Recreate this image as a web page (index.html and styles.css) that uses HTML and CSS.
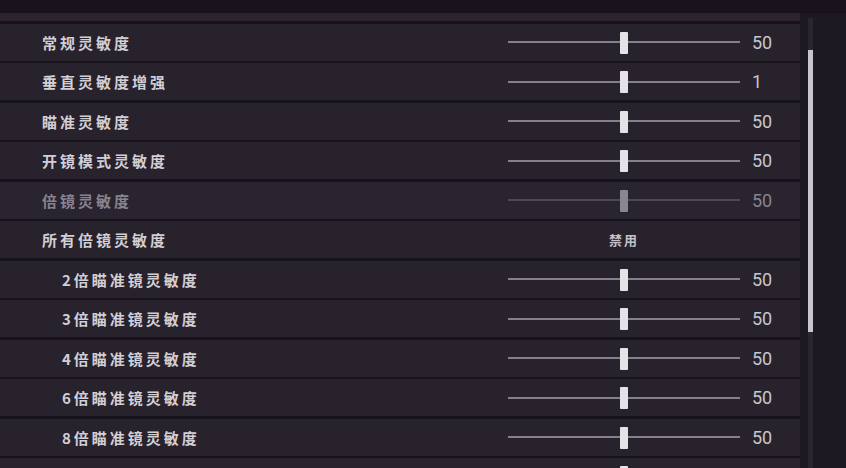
FILE: index.html
```html
<!DOCTYPE html>
<html lang="zh-CN">
<head>
    <meta charset="UTF-8">
    <title>灵敏度设置</title>
    <link rel="stylesheet" href="styles.css">
</head>
<body>
    <div class="top-bar"></div>

    <div class="main">
        <div class="list">
            <div class="row row-cut"></div>

            <div class="row">
                <span class="label">常规灵敏度</span>
                <div class="slider"><div class="track"></div><div class="knob"></div></div>
                <span class="value">50</span>
            </div>
            <div class="row">
                <span class="label">垂直灵敏度增强</span>
                <div class="slider"><div class="track"></div><div class="knob"></div></div>
                <span class="value">1</span>
            </div>
            <div class="row">
                <span class="label">瞄准灵敏度</span>
                <div class="slider"><div class="track"></div><div class="knob"></div></div>
                <span class="value">50</span>
            </div>
            <div class="row">
                <span class="label">开镜模式灵敏度</span>
                <div class="slider"><div class="track"></div><div class="knob"></div></div>
                <span class="value">50</span>
            </div>
            <div class="row disabled">
                <span class="label">倍镜灵敏度</span>
                <div class="slider"><div class="track"></div><div class="knob"></div></div>
                <span class="value">50</span>
            </div>
            <div class="row">
                <span class="label">所有倍镜灵敏度</span>
                <div class="option">禁用</div>
                <span class="value"></span>
            </div>
            <div class="row sub">
                <span class="label">2倍瞄准镜灵敏度</span>
                <div class="slider"><div class="track"></div><div class="knob"></div></div>
                <span class="value">50</span>
            </div>
            <div class="row sub">
                <span class="label">3倍瞄准镜灵敏度</span>
                <div class="slider"><div class="track"></div><div class="knob"></div></div>
                <span class="value">50</span>
            </div>
            <div class="row sub">
                <span class="label">4倍瞄准镜灵敏度</span>
                <div class="slider"><div class="track"></div><div class="knob"></div></div>
                <span class="value">50</span>
            </div>
            <div class="row sub">
                <span class="label">6倍瞄准镜灵敏度</span>
                <div class="slider"><div class="track"></div><div class="knob"></div></div>
                <span class="value">50</span>
            </div>
            <div class="row sub">
                <span class="label">8倍瞄准镜灵敏度</span>
                <div class="slider"><div class="track"></div><div class="knob"></div></div>
                <span class="value">50</span>
            </div>
            <div class="row sub">
                <span class="label">15倍瞄准镜灵敏度</span>
                <div class="slider"><div class="track"></div><div class="knob"></div></div>
                <span class="value">50</span>
            </div>
        </div>

        <div class="scroll">
            <div class="thumb"></div>
        </div>
    </div>
</body>
</html>
```

FILE: styles.css
```css
body {
    margin: 0;
    height: 468px;
    overflow: hidden;
    background-color: #1d1923;
    font-family: "Noto Sans CJK SC", "Noto Sans", sans-serif;
    color: #d2ced6;
}

.top-bar {
    height: 13px;
    background-color: #19131d;
}

.main {
    display: flex;
}

.list {
    width: 800px;
    display: flex;
    flex-direction: column;
    gap: 2.5px;
    background-color: #17131b;
}

.row {
    height: 37px;
    display: grid;
    grid-template-columns: 508px 232px 1fr;
    align-items: center;
    background-color: #27222c;
}

.row-cut {
    height: 8px;
    background-color: #2d2330;
}

.label {
    padding-left: 42px;
    font-size: 15px;
    font-weight: 700;
    letter-spacing: 3px;
    white-space: nowrap;
}

.sub .label {
    padding-left: 62px;
}

.slider {
    position: relative;
    height: 37px;
    display: flex;
    align-items: center;
}

.track {
    width: 100%;
    height: 2px;
    background-color: #85818b;
}

.knob {
    position: absolute;
    left: 112px;
    top: 8px;
    width: 8px;
    height: 22px;
    border-radius: 1px;
    background-color: #e4e2e6;
}

.value {
    padding-left: 12px;
    font-family: Roboto, "Liberation Sans", sans-serif;
    font-size: 18px;
    color: #c9c5cd;
}

.option {
    text-align: center;
    font-size: 13px;
    font-weight: 700;
    letter-spacing: 2px;
    color: #c4c0c8;
}

.disabled {
    background-color: #2a2430;
}

.disabled .label,
.disabled .value {
    color: #88838e;
}

.disabled .track {
    background-color: #4c4752;
}

.disabled .knob {
    background-color: #8a8690;
}

.scroll {
    margin-left: 8px;
    margin-top: 5px;
    width: 5px;
    height: 460px;
    background-color: #2a2630;
}

.thumb {
    margin-top: 32px;
    height: 282px;
    background-color: #c8c6cc;
}
```
